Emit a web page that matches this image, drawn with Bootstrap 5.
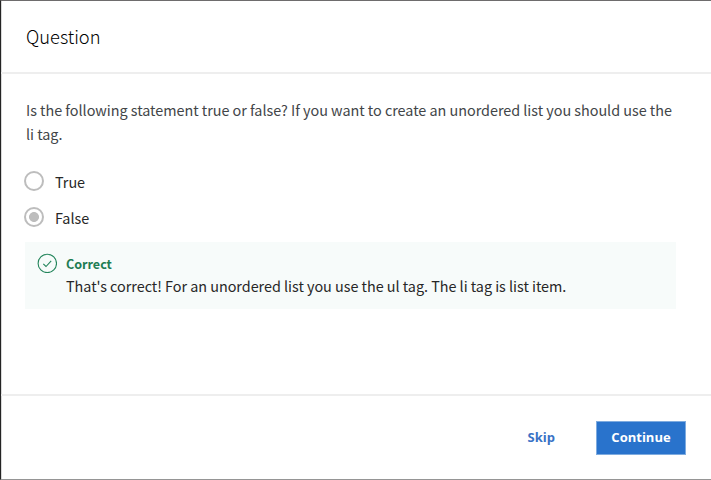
<!DOCTYPE html>
<html lang="en">
<head>
<meta charset="utf-8">
<meta name="viewport" content="width=device-width, initial-scale=1">
<title>Question</title>
<link href="https://cdn.jsdelivr.net/npm/bootstrap@5.3.0/dist/css/bootstrap.min.css" rel="stylesheet">
<style>
html, body { height: 100%; overflow: hidden; }
body { font-family: "Noto Sans CJK SC", "Noto Sans", sans-serif; color: #272727; background: #fff; }
.dialog-frame { height: 480px; border-left: 1px solid #242424; border-top: 1px solid #6e6c6d; border-bottom: 1px solid #959595; box-shadow: inset 1px 0 #d9d9d9; }
.dialog-head { height: 73px; border-bottom: 2px solid #eee; padding: 0 25px 2px 25px; }
.dialog-head h1 { font-size: 18.3px; font-weight: 300; line-height: 24px; color: #000; }
.dialog-main { padding: 24px 35px 0 24px; }
.prompt { font-size: 14.4px; line-height: 24px; letter-spacing: -.028px; color: #424548; margin: 0 0 23px 1px; white-space: nowrap; }
.choice { height: 36px; font-size: 14.4px; line-height: 24px; gap: 11px; padding-top: 1px; margin-left: -1px; letter-spacing: -.03px; }
.choice .form-check-input { width: 20px; height: 20px; margin: 1px 0 0; border: 2px solid #bdbdbd; background: none; opacity: 1; box-shadow: none; flex-shrink: 0; }
.choice .form-check-input:checked { background: radial-gradient(circle, #bdbdbd 4.6px, transparent 5.3px); }
.feedback { height: 67px; background: #f7fbfa; padding: 11.5px 12.5px; gap: 8.5px; font-size: 14.4px; line-height: 22px; letter-spacing: -.028px; white-space: nowrap; margin-top: 1px; }
.feedback strong { font-size: 12.6px; font-weight: 700; color: #1f7d53; }
.feedback .notes { margin-top: -.5px; }
.feedback svg { margin: -.5px 0 0 -.5px; margin-right: .5px; }
.dialog-foot { height: 85px; border-top: 2px solid #eee; padding: 1px 25px 0; gap: 25px; }
.dialog-foot .btn { font: 700 13px/20px "Open Sans", sans-serif; border-radius: 0; height: 34px; padding: 5px 15px 7px; }
.btn-skip { color: #3a72c6; }
.dialog-foot .btn-next, .btn-next:hover { width: 90px; padding-left: 0; padding-right: 0; color: #fff; background: #2973cc; border: 1px solid #7eabdf; }
</style>
<script src="https://cdn.jsdelivr.net/npm/bootstrap@5.3.0/dist/js/bootstrap.bundle.min.js"></script>
</head>
<body>
<div class="dialog-frame d-flex flex-column">
  <header class="dialog-head d-flex align-items-center"><h1 class="mb-0">Question</h1></header>
  <main class="dialog-main flex-grow-1">
    <p class="prompt">Is the following statement true or false? If you want to create an unordered list you should use the<br>li tag.</p>
    <label class="choice d-flex"><input class="form-check-input" type="radio" name="answer"><span>True</span></label>
    <label class="choice d-flex"><input class="form-check-input" type="radio" name="answer" checked><span>False</span></label>
    <div class="feedback d-flex">
      <svg width="20" height="20" viewBox="0 0 20 20" fill="none" stroke="#23855b" stroke-width="1.1" class="flex-shrink-0"><circle cx="10.3" cy="10.4" r="9.2"/><path d="M6.3 10.8l2.7 2.7 5.2-5.7"/></svg>
      <div class="notes d-flex flex-column"><strong>Correct</strong><span>That's correct! For an unordered list you use the ul tag. The li tag is list item.</span></div>
    </div>
  </main>
  <footer class="dialog-foot d-flex align-items-center justify-content-end">
    <button type="button" class="btn btn-skip">Skip</button>
    <button type="button" class="btn btn-next">Continue</button>
  </footer>
</div>
</body>
</html>
